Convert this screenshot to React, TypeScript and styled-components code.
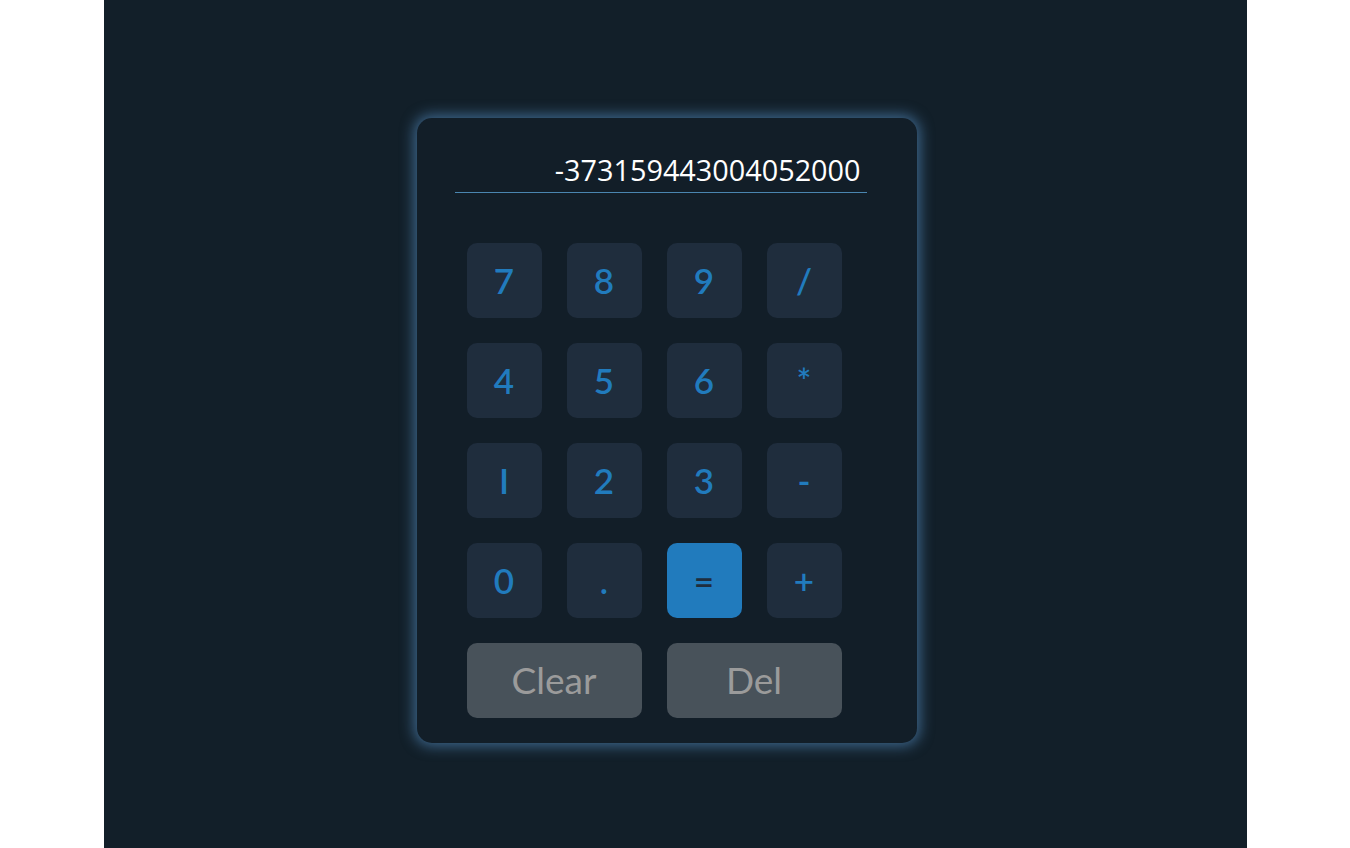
import React, { useState } from 'react'
import styled, { createGlobalStyle } from 'styled-components';

const GlobalStyle = createGlobalStyle`
  html, body {
    margin: 0;
    padding: 0;
    background: #ffffff;
  }
`

const Page = styled.div`
  width: 1143px;
  height: 848px;
  margin: 0 auto;
  background-color: #121f29;
  display: flex;
  justify-content: center;
  align-items: flex-start;
  padding: 118px 17px 0 0;
  box-sizing: border-box;
`

const Card = styled.div`
  width: 500px;
  height: 625px;
  box-sizing: border-box;
  background-color: #121e28;
  border-radius: 15px;
  box-shadow: 0 0 14px 3px rgba(90, 150, 205, 0.6);
  padding: 36px 50px 25px 38px;
  display: flex;
  flex-direction: column;
`

const Display = styled.div`
  height: 38px;
  border-bottom: 1px solid #4a86b0;
  color: #ffffff;
  font-family: "Open Sans", "Noto Sans", sans-serif;
  font-size: 28.8px;
  line-height: 32px;
  text-align: right;
  padding-right: 6px;
  white-space: nowrap;
`

const Keys = styled.div`
  display: grid;
  grid-template-columns: repeat(4, 75px);
  grid-auto-rows: 75px;
  gap: 25px;
  margin: 50px 0 0 12px;
`

const Key = styled.button<{ $variant?: 'num' | 'equals' | 'action'; $wide?: boolean }>`
  grid-column: ${props => props.$wide ? 'span 2' : 'span 1'};
  border: none;
  border-radius: 10px;
  font-family: Lato, "Open Sans", sans-serif;
  font-weight: ${props => props.$variant === 'action' ? 400 : 600};
  font-size: ${props => props.$variant === 'action' ? '37px' : '35px'};
  padding: 0;
  padding-bottom: 2px;
  cursor: pointer;
  background-color: ${props =>
    props.$variant === 'equals' ? '#217bbd' :
    props.$variant === 'action' ? '#48525a' : '#1f2d3d'};
  color: ${props =>
    props.$variant === 'equals' ? '#1f2d3d' :
    props.$variant === 'action' ? '#9b9b9b' : '#217bbd'};
`

const rows = [
  ['7', '8', '9', '/'],
  ['4', '5', '6', '*'],
  ['1', '2', '3', '-'],
  ['0', '.', '=', '+'],
]

export default function App() {
  const [value, setValue] = useState('-373159443004052000')

  const press = (k: string) => {
    if (k === '=') {
      try {
        // eslint-disable-next-line no-new-func
        setValue(String(Function(`return (${value})`)()))
      } catch {
        setValue('Error')
      }
      return
    }
    setValue(v => v + k)
  }

  return (
    <Page>
      <GlobalStyle />
      <Card>
        <Display>{value}</Display>
        <Keys>
          {rows.flat().map(k => (
            <Key key={k} $variant={k === '=' ? 'equals' : 'num'} onClick={() => press(k)}>
              {k === '1' ? 'I' : k}
            </Key>
          ))}
          <Key $variant="action" $wide onClick={() => setValue('')}>Clear</Key>
          <Key $variant="action" $wide onClick={() => setValue(v => v.slice(0, -1))}>Del</Key>
        </Keys>
      </Card>
    </Page>
  )
}
